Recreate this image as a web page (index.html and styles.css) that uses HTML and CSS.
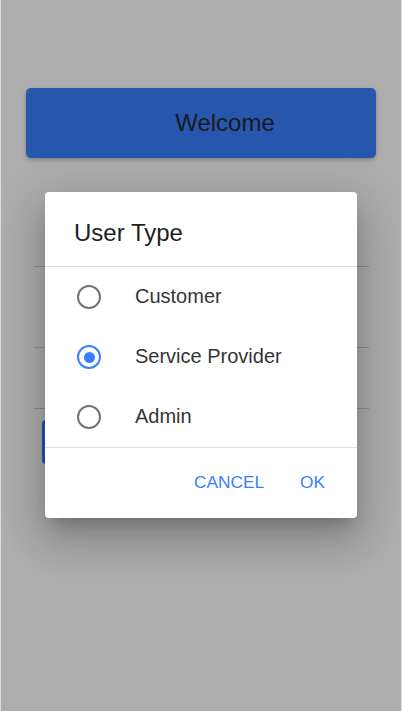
FILE: index.html
```html
<!DOCTYPE html>
<html lang="en">
<head>
<meta charset="utf-8">
<title>User Type</title>
<link rel="stylesheet" href="styles.css">
</head>
<body>
<div class="app">
  <main class="page">
    <button class="welcome">Welcome</button>
    <div class="list">
      <div class="item"></div>
      <div class="item"></div>
      <div class="item"></div>
    </div>
    <button class="action" aria-label="Login"></button>
  </main>
  <div class="backdrop"></div>
  <div class="dialog" role="dialog">
    <h2 class="title">User Type</h2>
    <div class="options">
      <label class="option"><span class="radio"></span><span class="label">Customer</span></label>
      <label class="option checked"><span class="radio"></span><span class="label">Service Provider</span></label>
      <label class="option"><span class="radio"></span><span class="label">Admin</span></label>
    </div>
    <div class="buttons">
      <button class="btn">CANCEL</button>
      <button class="btn">OK</button>
    </div>
  </div>
</div>
</body>
</html>
```
FILE: styles.css
```css
html {
  background: #dcdcdc;
}
body {
  margin: 0 1px;
  font-family: "Liberation Sans", Arial, sans-serif;
}
.app {
  position: relative;
  height: 711px;
  background: #ffffff;
  overflow: hidden;
}
.page {
  display: flex;
  flex-direction: column;
  padding: 88px 25px 0 25px;
}
.welcome {
  height: 70px;
  border: none;
  border-radius: 5px;
  background: #3880ff;
  color: #262830;
  font-family: inherit;
  font-size: 24px;
  padding: 0 0 0 48px;
  box-shadow: 0 2px 4px rgba(0,0,0,0.25);
}
.list {
  margin: 108px 7px 0 8px;
  display: flex;
  flex-direction: column;
}
.item {
  height: 60px;
  border-bottom: 1px solid #d0d0d4;
}
.item:first-child {
  height: 0;
}
.item:nth-child(2) {
  height: 80px;
}
.action {
  align-self: flex-start;
  width: 250px;
  margin: 11px 0 0 16px;
  height: 44px;
  border: none;
  border-radius: 4px;
  background: #3880ff;
}
.backdrop {
  position: absolute;
  inset: 0;
  background: rgba(0,0,0,0.32);
}
.dialog {
  position: absolute;
  left: 44px;
  top: 192px;
  width: 312px;
  background: #ffffff;
  border-radius: 4px;
  box-shadow: 0 11px 15px -7px rgba(0,0,0,0.2), 0 24px 38px 3px rgba(0,0,0,0.14), 0 9px 46px 8px rgba(0,0,0,0.12);
}
.title {
  margin: 0;
  padding: 27px 28px 19px 29px;
  font-size: 24px;
  line-height: 28px;
  font-weight: normal;
  color: #1f1f1f;
  border-bottom: 1px solid #dedede;
}
.options {
  display: flex;
  flex-direction: column;
  border-bottom: 1px solid #dedede;
}
.option {
  height: 60px;
  display: flex;
  align-items: center;
  padding-left: 32px;
  gap: 34px;
}
.radio {
  width: 20px;
  height: 20px;
  border: 2.5px solid #737373;
  border-radius: 50%;
  display: flex;
  align-items: center;
  justify-content: center;
  flex: none;
}
.checked .radio {
  border-color: #3880ff;
}
.checked .radio::after {
  content: "";
  width: 11px;
  height: 11px;
  border-radius: 50%;
  background: #3880ff;
}
.label {
  font-size: 20px;
  color: #353535;
  margin-top: -1px;
}
.buttons {
  height: 70px;
  display: flex;
  justify-content: flex-end;
  align-items: center;
  gap: 36px;
  padding-right: 32px;
}
.btn {
  border: none;
  background: none;
  padding: 0;
  font-family: inherit;
  font-size: 17.3px;
  color: #3880ff;
  margin-top: -2px;
}
```
